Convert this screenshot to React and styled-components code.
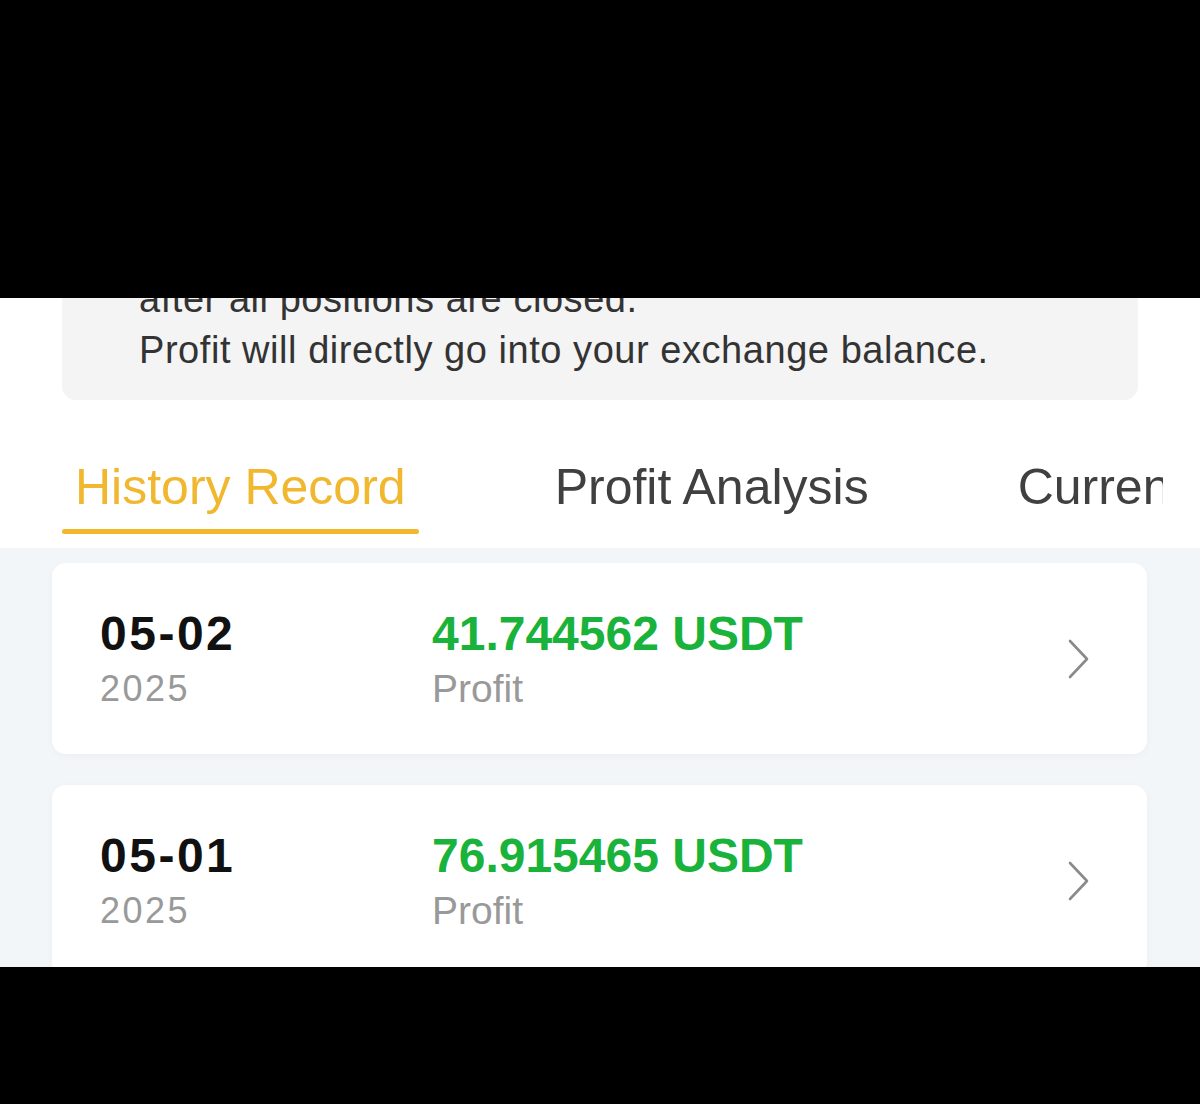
import React from "react";
import styled, { createGlobalStyle } from "styled-components";

const GlobalStyle = createGlobalStyle`
  html, body {
    margin: 0;
    padding: 0;
    background: #000;
  }
  body {
    font-family: "Liberation Sans", Arial, sans-serif;
  }
`;

const Page = styled.div`
  width: 1200px;
  height: 1104px;
  padding-top: 298px;
  box-sizing: border-box;
  background: #000;
`;

const Screen = styled.div`
  height: 669px;
  overflow: hidden;
  background: #fff;
`;

const Notice = styled.div`
  margin: -48px 62px 0 62px;
  padding: 24px 40px 24px 77px;
  background: #f4f4f4;
  border-radius: 14px;
  font-size: 38px;
  line-height: 51px;
  letter-spacing: 0.55px;
  color: #333;
`;

const Tabs = styled.div`
  display: flex;
  gap: 123px;
  margin: 57px 37px 0 62px;
  overflow: hidden;
  white-space: nowrap;
`;

const Tab = styled.div`
  flex-shrink: 0;
  padding: 0 13px 14px;
  font-size: 50px;
  line-height: 60px;
  color: ${(p) => (p.active ? "#f0b72f" : "#404040")};
  display: flex;
  flex-direction: column;

  &::after {
    content: "";
    display: block;
    height: 5px;
    margin: 12px -13px 0;
    border-radius: 3px;
    background: ${(p) => (p.active ? "#f0b72f" : "transparent")};
  }
`;

const List = styled.div`
  background: #f3f6f9;
  padding: 15px 53px 40px 52px;
  display: flex;
  flex-direction: column;
  gap: 31px;
`;

const Card = styled.div`
  height: 191px;
  box-sizing: border-box;
  background: #fff;
  border-radius: 14px;
  box-shadow: 0 2px 10px rgba(0, 0, 0, 0.03);
  display: flex;
  align-items: center;
  padding: 0 57px 0 48px;
`;

const Col = styled.div`
  display: flex;
  flex-direction: column;
  gap: 5px;
  margin-top: -3px;
  width: ${(p) => p.width || "auto"};
  flex: ${(p) => (p.grow ? 1 : "none")};
`;

const Main = styled.div`
  font-size: 48px;
  line-height: 57px;
  font-weight: 700;
  letter-spacing: ${(p) => (p.date ? "2.5px" : "0")};
  color: ${(p) => p.color || "#111"};
`;

const Sub = styled.div`
  font-size: ${(p) => p.size || "39px"};
  line-height: 43px;
  letter-spacing: ${(p) => p.spacing || "0"};
  color: #999;
`;

const Chevron = () => (
  <svg width="22" height="40" viewBox="0 0 22 40" fill="none">
    <polyline
      points="2,2 19,20 2,38"
      stroke="#8a8a8a"
      strokeWidth="2.6"
      strokeLinecap="round"
      strokeLinejoin="round"
    />
  </svg>
);

const records = [
  { date: "05-02", year: "2025", amount: "41.744562 USDT" },
  { date: "05-01", year: "2025", amount: "76.915465 USDT" },
];

export default function App() {
  return (
    <>
      <GlobalStyle />
      <Page>
        <Screen>
          <Notice>
            <div>after all positions are closed.</div>
            <div>Profit will directly go into your exchange balance.</div>
          </Notice>

          <Tabs>
            <Tab active>History Record</Tab>
            <Tab>Profit Analysis</Tab>
            <Tab>Current Position</Tab>
          </Tabs>

          <List>
            {records.map((r) => (
              <Card key={r.date}>
                <Col width="332px">
                  <Main date>{r.date}</Main>
                  <Sub size="36px" spacing="2.5px">{r.year}</Sub>
                </Col>
                <Col grow>
                  <Main color="#19b23b">{r.amount}</Main>
                  <Sub>Profit</Sub>
                </Col>
                <Chevron />
              </Card>
            ))}
          </List>
        </Screen>
      </Page>
    </>
  );
}
